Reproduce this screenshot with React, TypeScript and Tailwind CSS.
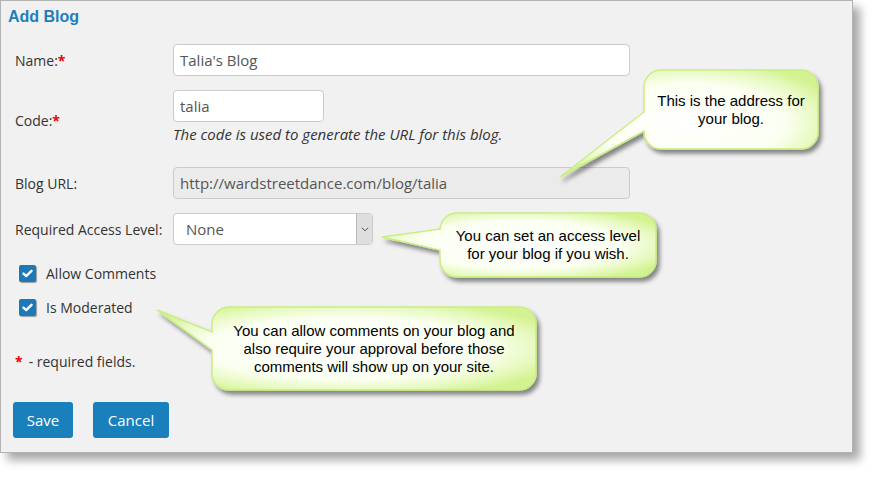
import React from "react";

type Bubble = {
  x: number;
  y: number;
  w: number;
  h: number;
  tip: [number, number];
  base: [number, number];
  lines: string[];
};

const BUBBLES: Bubble[] = [
  {
    x: 644,
    y: 70,
    w: 174,
    h: 79,
    tip: [560, 177],
    base: [112, 131],
    lines: ["This is the address for", "your blog."],
  },
  {
    x: 440,
    y: 213,
    w: 216,
    h: 64,
    tip: [382, 237],
    base: [229, 250],
    lines: ["You can set an access level", "for your blog if you wish."],
  },
  {
    x: 212,
    y: 307,
    w: 324,
    h: 83,
    tip: [157, 310],
    base: [332, 350],
    lines: [
      "You can allow comments on your blog and",
      "also require your approval before those",
      "comments will show up on your site.",
    ],
  },
];

function bubblePath(b: Bubble) {
  const r = 17;
  const { x, y, w, h } = b;
  return [
    `M ${x + r} ${y}`,
    `H ${x + w - r}`,
    `A ${r} ${r} 0 0 1 ${x + w} ${y + r}`,
    `V ${y + h - r}`,
    `A ${r} ${r} 0 0 1 ${x + w - r} ${y + h}`,
    `H ${x + r}`,
    `A ${r} ${r} 0 0 1 ${x} ${y + h - r}`,
    `V ${b.base[1]}`,
    `L ${b.tip[0]} ${b.tip[1]}`,
    `L ${x} ${b.base[0]}`,
    `V ${y + r}`,
    `A ${r} ${r} 0 0 1 ${x + r} ${y}`,
    "Z",
  ].join(" ");
}

function Callouts() {
  return (
    <>
      <svg
        className="absolute inset-0 pointer-events-none"
        width={878}
        height={478}
        viewBox="0 0 878 478"
      >
        <defs>
          <radialGradient id="glow" cx="50%" cy="50%" r="60%">
            <stop offset="0%" stopColor="#ffffff" />
            <stop offset="62%" stopColor="#fbfff1" />
            <stop offset="85%" stopColor="#e6f9bd" />
            <stop offset="100%" stopColor="#d3f390" />
          </radialGradient>
          <filter id="drop" x="-20%" y="-20%" width="140%" height="150%">
            <feDropShadow dx="3" dy="4" stdDeviation="2" floodColor="#000" floodOpacity="0.45" />
          </filter>
        </defs>
        {BUBBLES.map((b, i) => (
          <path
            key={i}
            d={bubblePath(b)}
            fill="url(#glow)"
            stroke="#c9ee84"
            strokeWidth={1.5}
            filter="url(#drop)"
          />
        ))}
      </svg>
      {BUBBLES.map((b, i) => (
        <div
          key={i}
          className="absolute flex flex-col items-center justify-center text-center text-[15px] leading-[18px] text-black font-['Liberation_Sans',Arial,sans-serif]"
          style={{ left: b.x, top: b.y, width: b.w, height: b.h }}
        >
          {b.lines.map((l) => (
            <span key={l}>{l}</span>
          ))}
        </div>
      ))}
    </>
  );
}

function Req() {
  return <span className="text-[#e00] font-bold">*</span>;
}

function Check({ label }: { label: string }) {
  return (
    <label className="flex items-center h-[18px] pl-[4px]">
      <span className="w-[17px] h-[17px] rounded-[2px] bg-[#1b79b8] shadow-[1px_1px_1px_rgba(0,0,0,0.35)] flex items-center justify-center">
        <svg width="11" height="9" viewBox="0 0 11 9">
          <path d="M1.5 4.6 L4.2 7.1 L9.5 1.8" fill="none" stroke="#fff" strokeWidth={2.4} strokeLinecap="round" strokeLinejoin="round" />
        </svg>
      </span>
      <span className="ml-[10px]">{label}</span>
    </label>
  );
}

export default function App() {
  const input =
    "h-[32px] rounded-[4px] border border-[#cbcbcb] px-[6px] text-[15px] text-[#555] flex items-center";
  return (
    <div className="relative w-[878px] h-[478px] bg-white font-['Open_Sans',sans-serif] text-[14px] text-[#333]">
      <div className="w-[853px] h-[453px] border border-[#b3b3b3] bg-[#f1f1f1] shadow-[7px_7px_9px_rgba(0,0,0,0.35)]">
        <div className="pl-[7px] pt-[6px] h-[26px] text-[16px] leading-[20px] font-bold text-[#1a80c0] font-['Liberation_Sans',Arial,sans-serif]">
          Add Blog
        </div>
        <div className="pl-[14px]">
          <div className="flex items-center mt-[17px]">
            <div className="w-[158px]">
              Name:<Req />
            </div>
            <div className={`${input} w-[457px] bg-white`}>Talia's Blog</div>
          </div>

          <div className="flex items-start mt-[14px]">
            <div className="w-[158px] mt-[21px] leading-[20px]">
              Code:<Req />
            </div>
            <div>
              <div className={`${input} w-[151px] bg-white`}>talia</div>
              <div className="italic text-[15px] leading-[20px] mt-[2px]">
                The code is used to generate the URL for this blog.
              </div>
            </div>
          </div>

          <div className="flex items-center mt-[23px]">
            <div className="w-[158px]">Blog URL:</div>
            <div className={`${input} w-[457px] bg-[#ebebeb]`}>
              http://wardstreetdance.com/blog/talia
            </div>
          </div>

          <div className="flex items-center mt-[14px]">
            <div className="w-[158px]">Required Access Level:</div>
            <div className="h-[32px] w-[200px] rounded-[4px] border border-[#cbcbcb] bg-white flex overflow-hidden">
              <div className="flex-1 flex items-center pl-[12px] text-[15px] text-[#555]">None</div>
              <div className="w-[16px] border-l border-[#bbb] bg-[#dedede] flex items-center justify-center">
                <svg width="8" height="5" viewBox="0 0 8 5">
                  <path d="M0.8 0.8 L4 3.8 L7.2 0.8" fill="none" stroke="#555" strokeWidth={1} />
                </svg>
              </div>
            </div>
          </div>

          <div className="mt-[19px]">
            <Check label="Allow Comments" />
          </div>
          <div className="mt-[16px]">
            <Check label="Is Moderated" />
          </div>

          <div className="mt-[36px] leading-[20px] flex items-center">
            <Req />
            <span className="ml-[6px]">- required fields.</span>
          </div>

          <div className="mt-[30px] flex gap-[20px] -ml-[2px]">
            <button className="h-[36px] w-[60px] rounded-[3px] bg-[#1a80bb] text-white text-[15px]">
              Save
            </button>
            <button className="h-[36px] w-[76px] rounded-[3px] bg-[#1a80bb] text-white text-[15px]">
              Cancel
            </button>
          </div>
        </div>
      </div>
      <Callouts />
    </div>
  );
}
